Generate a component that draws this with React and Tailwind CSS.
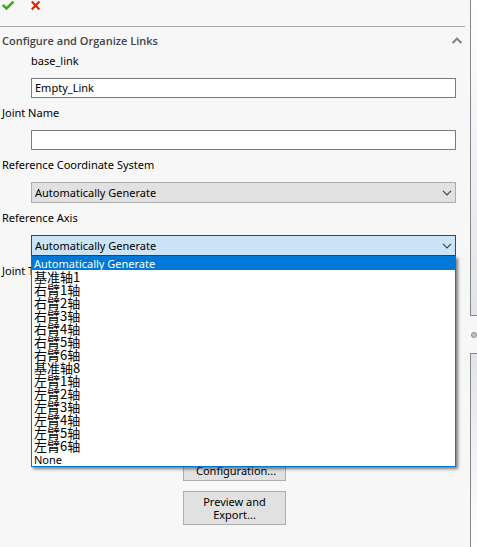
import React from "react";

const axes = [
  "Automatically Generate",
  "基准轴1",
  "右臂1轴",
  "右臂2轴",
  "右臂3轴",
  "右臂4轴",
  "右臂5轴",
  "右臂6轴",
  "基准轴8",
  "左臂1轴",
  "左臂2轴",
  "左臂3轴",
  "左臂4轴",
  "左臂5轴",
  "左臂6轴",
  "None",
];

function Field({ id, label, indent, children }) {
  return (
    <div className="mb-[7px]">
      <label htmlFor={id} className={`block h-4 leading-4 ${indent ? "pl-[31px]" : "pl-[2px]"}`}>
        {label}
      </label>
      <div className="relative mt-[9px] mr-[14px] ml-[31px]">{children}</div>
    </div>
  );
}

function TextBox({ id, value }) {
  return (
    <input
      id={id}
      type="text"
      defaultValue={value}
      className="block h-5 w-full border border-[#7a7a7a] bg-white px-[3px] pb-[2px] outline-none"
    />
  );
}

function DropDown({ id, active, options }) {
  return (
    <>
      <select
        id={id}
        className={`block h-[21px] w-full appearance-none border px-[3px] pt-px outline-none ${
          active ? "border-[#005499] bg-[#cce4f7]" : "border-[#adadad] bg-[#e1e1e1]"
        }`}
      >
        {options.map((o) => (
          <option key={o}>{o}</option>
        ))}
      </select>
      <svg
        className="pointer-events-none absolute top-2 right-1 h-[6px] w-[10px]"
        viewBox="0 0 10 6"
        fill="none"
        stroke="#444"
        strokeWidth="1.2"
      >
        <path d="M1 .8 5 4.8 9 .8" />
      </svg>
    </>
  );
}

function PushButton({ children }) {
  return (
    <button
      type="button"
      className="h-[34px] w-[103px] border border-[#adadad] bg-[#e1e1e1] px-3 text-center leading-[13px]"
    >
      {children}
    </button>
  );
}

export default function App() {
  return (
    <div className="flex h-screen overflow-hidden bg-[#f7f7f7] font-['Noto_Sans','Noto_Sans_CJK_SC',sans-serif] text-[11px] text-black">
      <main className="min-w-0 flex-1">
        <header className="mr-[5px] flex h-[27px] gap-4 border-b border-[#a5a5a5]">
          <button type="button" aria-label="OK" className="ml-px h-3 w-[14px]">
            <svg viewBox="0 0 14 12" className="h-3 w-[14px]" fill="none" stroke="#43a524" strokeWidth="2.6">
              <path d="M1.8 5 5.5 8.5 12.5 1.6" />
            </svg>
          </button>
          <button type="button" aria-label="Cancel" className="h-3 w-[10px]">
            <svg viewBox="0 0 10 12" className="h-3 w-[10px]" fill="none" stroke="#dc2a06" strokeWidth="2.2">
              <path d="M.8 1.6 8.4 9.6M8.4 1.6.8 9.6" />
            </svg>
          </button>
        </header>

        <div className="flex h-[26px] items-center justify-between pt-[2px] pr-2 pl-[2px]">
          <h1 className="font-['Open_Sans','Noto_Sans',sans-serif] font-semibold text-[#444]">
            Configure and Organize Links
          </h1>
          <button type="button" aria-label="Collapse" className="pb-[2px]">
            <svg viewBox="0 0 10 7" className="h-[7px] w-[10px]" fill="none" stroke="#7d7d7d" strokeWidth="2">
              <path d="M.6 6 5 1.6 9.4 6" />
            </svg>
          </button>
        </div>

        <Field id="link" label="base_link" indent>
          <TextBox id="link" value="Empty_Link" />
        </Field>
        <Field id="joint" label="Joint Name">
          <TextBox id="joint" value="" />
        </Field>
        <Field id="coord" label="Reference Coordinate System">
          <DropDown id="coord" options={axes.slice(0, 1)} />
        </Field>
        <Field id="axis" label="Reference Axis">
          <DropDown id="axis" options={axes} active />
          <ul
            role="listbox"
            aria-label="Reference Axis"
            className="absolute top-full right-0 left-0 z-10 border border-t-0 border-[#0078d7] bg-white pb-px shadow-[2px_2px_3px_rgba(0,0,0,0.5)]"
          >
            {axes.map((a, i) => (
              <li
                key={a}
                role="option"
                aria-selected={i === 0}
                className={
                  i === 0
                    ? "h-[14px] bg-[#0078d7] pl-[2px] leading-4 text-white"
                    : i === axes.length - 1
                      ? "h-[13px] pl-[2px] leading-4"
                      : "h-[13px] pl-[2px] font-['Noto_Sans_CJK_SC',sans-serif] text-[13px] leading-[13px]"
                }
              >
                {a}
              </li>
            ))}
          </ul>
        </Field>
        <Field id="type" label="Joint Type">
          <DropDown id="type" options={[]} />
        </Field>

        <div className="mt-[138px] flex flex-col items-center gap-[10px] pr-px">
          <PushButton>Load Configuration...</PushButton>
          <PushButton>Preview and Export...</PushButton>
        </div>
      </main>

      <aside className="flex w-[7px] shrink-0 flex-col overflow-hidden">
        <div className="h-[316px] border-b border-l border-[#868686] bg-linear-to-b from-white to-[#e2e4ec]" />
        <div className="flex h-[37px] items-center pl-px">
          <span className="size-[6px] shrink-0 rounded-full border border-[#8e8e8e] bg-[#c4c4c4]" />
        </div>
        <div className="flex-1 border-t border-l border-[#868686] bg-linear-to-b from-[#e2e4ec] to-white" />
      </aside>
    </div>
  );
}
